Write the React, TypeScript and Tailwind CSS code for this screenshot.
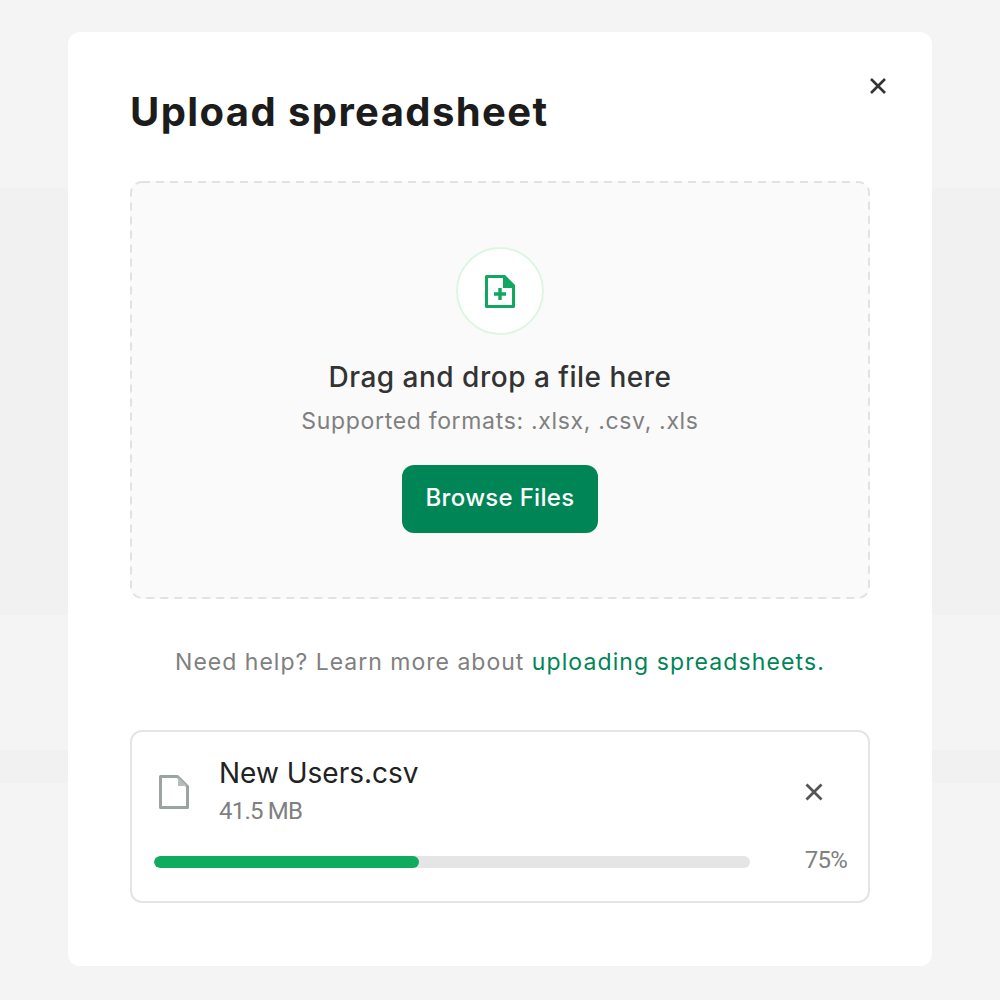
import React from "react";

export default function App() {
  return (
    <div className="relative w-[1000px] h-[1000px] bg-[#f4f4f4] overflow-hidden font-['Inter','Noto_Sans',sans-serif]">
      <div className="pt-[188px]">
        <div className="h-[427px] bg-[#f1f1f1]" />
        <div className="mt-[135px] h-[33px] bg-[#f1f1f1]" />
      </div>
      <div className="absolute left-[68px] top-8 w-[864px] h-[934px] bg-white rounded-xl px-[62px] pt-[55px]">
        <button className="absolute right-[44px] top-[44px] text-[#333]">
          <svg width="20" height="20" viewBox="0 0 20 20" fill="none" stroke="currentColor" strokeWidth="2.6"><path d="M3 3l14 14M17 3L3 17" /></svg>
        </button>
        <h1 className="text-[40px] leading-[50px] font-bold text-[#1c1c1c] tracking-[1.4px]">Upload spreadsheet</h1>
        <div className="relative mt-[44px] h-[418px] rounded-xl bg-[#fafafa] flex flex-col items-center pt-[66px]">
          <svg className="absolute inset-0" width="740" height="418" fill="none">
            <rect x="1" y="1" width="738" height="416" rx="11" stroke="#e2e2e2" strokeWidth="2" strokeDasharray="8 6" />
          </svg>
          <div className="w-[88px] h-[88px] rounded-full bg-white border-2 border-[#ddf6e2] flex items-center justify-center">
            <svg width="32" height="35" viewBox="0 0 32 35" fill="none">
              <path d="M2.500 2.500h16.500l10.500 10.500v19.500h-27z" stroke="#10a860" strokeWidth="3" strokeLinejoin="round" />
              <path d="M19 1h2l10 10v3H19z" fill="#10a860" />
              <path d="M16 14v12M10 20h12" stroke="#10a860" strokeWidth="3.4" />
            </svg>
          </div>
          <div className="mt-6 text-[28px] leading-9 font-medium text-[#333] tracking-[0.5px]">Drag and drop a file here</div>
          <div className="mt-[10px] text-[23px] leading-8 text-[#808080] tracking-[0.67px]">Supported formats: .xlsx, .csv, .xls</div>
          <button className="mt-[28px] w-[196px] h-[68px] pb-[2px] rounded-xl bg-[#008556] text-white text-[24px] font-medium tracking-[0.3px]">Browse Files</button>
        </div>
        <p className="mt-[47px] text-center text-[23px] leading-8 text-[#808080] tracking-[1px]">Need help? Learn more about <span className="text-[#008556] tracking-[1.1px]">uploading spreadsheets.</span></p>
        <div className="mt-[52px] h-[173px] border-2 border-[#e5e5e5] rounded-xl px-[22px] pt-[25px]">
          <div className="flex items-center">
            <svg className="ml-[5px]" width="30" height="34" viewBox="0 0 30 34" fill="none">
              <path d="M1.500 1.500h17l10 10v21h-27z" stroke="#9aa5a0" strokeWidth="3" strokeLinejoin="round" />
              <path d="M19 2l9 9h-9z" fill="#b5bdb9" />
            </svg>
            <div className="ml-[30px]">
              <div className="text-[28px] leading-8 text-[#222]">New Users.csv</div>
              <div className="mt-[6px] text-[24px] leading-8 text-[#808080] tracking-[-0.8px] font-['Roboto',sans-serif]">41.5 MB</div>
            </div>
            <svg className="ml-auto mr-[22px]" width="20" height="20" viewBox="0 0 20 20" fill="none" stroke="#555" strokeWidth="2.8"><path d="M2.500 2.500l15 15M17.500 2.500l-15 15" /></svg>
          </div>
          <div className="mt-[17px] flex items-center justify-between">
            <div className="w-[596px] h-3 rounded-full bg-[#e5e5e5] overflow-hidden">
              <div className="w-[265px] h-3 rounded-full bg-[#0fab5f]" />
            </div>
            <div className="mr-[-1px] mb-[4px] text-[24px] leading-8 text-[#808080] tracking-[-0.8px] font-['Roboto',sans-serif]">75%</div>
          </div>
        </div>
      </div>
    </div>
  );
}
